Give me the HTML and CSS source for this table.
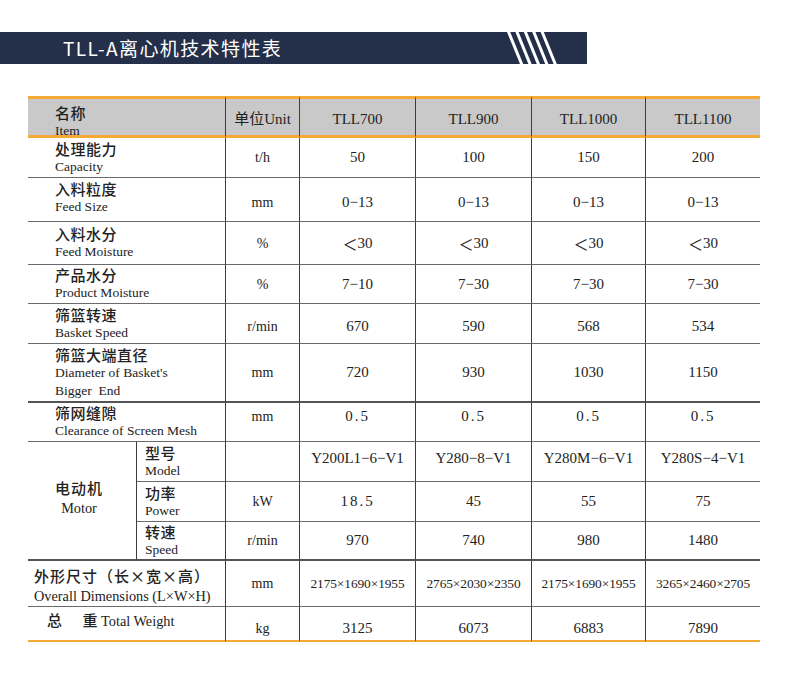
FILE: index.html
```html
<!DOCTYPE html>
<html lang="zh-CN">
<head>
<meta charset="utf-8">
<title>TLL-A离心机技术特性表</title>
<link rel="stylesheet" href="styles.css">
</head>
<body>
<div class="page">
  <div class="titlebar">
    <h1 class="title">TLL-A离心机技术特性表</h1>
    <svg class="stripes" width="52" height="32" viewBox="0 0 52 32" aria-hidden="true">
      <polygon points="1,0 4.2,0 17.2,32 14,32" fill="#fff"/>
      <polygon points="9.4,0 12.6,0 25.6,32 22.4,32" fill="#fff"/>
      <polygon points="17.8,0 21,0 34,32 30.8,32" fill="#fff"/>
      <polygon points="26.2,0 29.4,0 42.4,32 39.2,32" fill="#fff"/>
      <polygon points="34.6,0 37.8,0 50.8,32 47.6,32" fill="#fff"/>
    </svg>
  </div>

  <div class="spec">
    <!-- header -->
    <div class="c head lbl span2"><span class="zh">名称</span><span class="en">Item</span></div>
    <div class="c head">单位Unit</div>
    <div class="c head">TLL700</div>
    <div class="c head">TLL900</div>
    <div class="c head">TLL1000</div>
    <div class="c head last">TLL1100</div>

    <!-- capacity -->
    <div class="c lbl span2"><span class="zh">处理能力</span><span class="en">Capacity</span></div>
    <div class="c unit">t/h</div>
    <div class="c">50</div>
    <div class="c">100</div>
    <div class="c">150</div>
    <div class="c last">200</div>

    <!-- feed size -->
    <div class="c lbl span2 low"><span class="zh">入料粒度</span><span class="en">Feed Size</span></div>
    <div class="c unit down">mm</div>
    <div class="c down">0−13</div>
    <div class="c down">0−13</div>
    <div class="c down">0−13</div>
    <div class="c last down">0−13</div>

    <!-- feed moisture -->
    <div class="c lbl span2"><span class="zh">入料水分</span><span class="en">Feed Moisture</span></div>
    <div class="c unit">%</div>
    <div class="c"><span class="lt">＜</span>30</div>
    <div class="c"><span class="lt">＜</span>30</div>
    <div class="c"><span class="lt">＜</span>30</div>
    <div class="c last"><span class="lt">＜</span>30</div>

    <!-- product moisture -->
    <div class="c lbl span2"><span class="zh">产品水分</span><span class="en">Product Moisture</span></div>
    <div class="c unit">%</div>
    <div class="c">7−10</div>
    <div class="c">7−30</div>
    <div class="c">7−30</div>
    <div class="c last">7−30</div>

    <!-- basket speed -->
    <div class="c lbl span2"><span class="zh">筛篮转速</span><span class="en">Basket Speed</span></div>
    <div class="c unit down">r/min</div>
    <div class="c down">670</div>
    <div class="c down">590</div>
    <div class="c down">568</div>
    <div class="c last down">534</div>

    <!-- diameter -->
    <div class="c lbl span2 thick"><span class="zh">筛篮大端直径</span><span class="en">Diameter of Basket's</span><span class="en">Bigger&nbsp; End</span></div>
    <div class="c unit thick">mm</div>
    <div class="c thick">720</div>
    <div class="c thick">930</div>
    <div class="c thick">1030</div>
    <div class="c last thick">1150</div>

    <!-- clearance -->
    <div class="c lbl span2"><span class="zh">筛网缝隙</span><span class="en">Clearance of Screen Mesh</span></div>
    <div class="c unit up">mm</div>
    <div class="c up spaced">0.5</div>
    <div class="c up spaced">0.5</div>
    <div class="c up spaced">0.5</div>
    <div class="c last up spaced">0.5</div>

    <!-- motor -->
    <div class="c motor thick"><span class="zh">电动机</span><span class="en big">Motor</span></div>
    <div class="c lbl sub"><span class="zh">型号</span><span class="en">Model</span></div>
    <div class="c unit"></div>
    <div class="c up-s">Y200L1−6−V1</div>
    <div class="c up-s">Y280−8−V1</div>
    <div class="c up-s">Y280M−6−V1</div>
    <div class="c last up-s">Y280S−4−V1</div>

    <div class="c lbl sub"><span class="zh">功率</span><span class="en">Power</span></div>
    <div class="c unit">kW</div>
    <div class="c spaced">18.5</div>
    <div class="c">45</div>
    <div class="c">55</div>
    <div class="c last">75</div>

    <div class="c lbl sub thick"><span class="zh">转速</span><span class="en">Speed</span></div>
    <div class="c unit thick">r/min</div>
    <div class="c thick">970</div>
    <div class="c thick">740</div>
    <div class="c thick">980</div>
    <div class="c last thick">1480</div>

    <!-- dimensions -->
    <div class="c lbl span2 dim"><span class="zh wide">外形尺寸（长×宽×高）</span><span class="en big">Overall Dimensions (L×W×H)</span></div>
    <div class="c unit">mm</div>
    <div class="c small">2175×1690×1955</div>
    <div class="c small">2765×2030×2350</div>
    <div class="c small">2175×1690×1955</div>
    <div class="c last small">3265×2460×2705</div>

    <!-- weight -->
    <div class="c lbl span2 weight end"><span class="wline"><span class="zh">总</span><span class="gap"></span><span class="zh zh-w">重</span><span class="en big">Total Weight</span></span></div>
    <div class="c unit end down2">kg</div>
    <div class="c end down2">3125</div>
    <div class="c end down2">6073</div>
    <div class="c end down2">6883</div>
    <div class="c last end down2">7890</div>
  </div>
</div>
</body>
</html>
```

FILE: styles.css
```css
* {
  box-sizing: border-box;
}

body {
  margin: 0;
  background: #ffffff;
  color: #222222;
}

.page {
  padding-top: 32px;
  width: 800px;
}

/* ---- title bar ---- */
.titlebar {
  width: 587px;
  height: 32px;
  background: #243049;
  display: flex;
  align-items: center;
}

.title {
  margin: 0;
  padding-left: 63px;
  font-family: "Noto Sans CJK SC", "Noto Sans", sans-serif;
  font-weight: 400;
  font-size: 19px;
  line-height: 32px;
  letter-spacing: 1.4px;
  color: #ffffff;
}

.stripes {
  display: block;
  margin-left: auto;
  margin-right: 29px;
}

/* ---- spec grid ---- */
.spec {
  margin-top: 32px;
  margin-left: 28px;
  width: 732px;
  display: grid;
  grid-template-columns: 109px 89px 74px 116px 116px 114px 114px;
  grid-template-rows: 42px 40px 44px 43px 39px 40px 59px 39px 40px 40px 39px 46px 35px;
  font-family: "Liberation Serif", "Noto Sans CJK SC", serif;
  font-size: 15px;
  color: #222222;
}

.c {
  display: flex;
  align-items: center;
  justify-content: center;
  border-bottom: 1px solid #6a6a6a;
  border-right: 1px solid #3c3c3c;
  white-space: nowrap;
  line-height: 17px;
}

.c.last {
  border-right: none;
}

.c.thick {
  border-bottom: 2px solid #555555;
}

.head {
  background: #c9c9c9;
  border-top: 3px solid #f6a935;
  border-bottom: 3px solid #f6a935;
  padding-top: 4px;
  font-size: 15px;
}

.c.end {
  border-bottom: 2px solid #f6a935;
}

.span2 {
  grid-column: span 2;
}

.lbl {
  flex-direction: column;
  align-items: flex-start;
  justify-content: center;
  padding-left: 27px;
}

.lbl.sub {
  padding-left: 8px;
}

.lbl.low {
  padding-bottom: 4px;
}

.head.lbl {
  padding-top: 9px;
}

.zh {
  font-family: "Noto Sans CJK SC", sans-serif;
  font-weight: 500;
  font-size: 15px;
  line-height: 18px;
  letter-spacing: 0.5px;
}

.zh.wide {
  letter-spacing: 1px;
}

.zh-w {
  margin-right: 3px;
}

.en {
  font-family: "Liberation Serif", serif;
  font-size: 13.5px;
  line-height: 18px;
}

.en.big {
  font-size: 14.3px;
}

.unit {
  font-size: 14px;
}

.lt {
  font-family: "Noto Sans CJK SC", sans-serif;
  font-size: 15px;
}

.down {
  padding-top: 6px;
}

.up {
  padding-bottom: 12px;
}

.up-s {
  padding-bottom: 6px;
}

.spaced {
  letter-spacing: 2px;
}

.small {
  font-size: 13.4px;
  letter-spacing: -0.1px;
}

.motor {
  grid-row: span 3;
  flex-direction: column;
  padding-right: 6px;
  padding-bottom: 8px;
}

.motor .zh {
  line-height: 22px;
  letter-spacing: 1px;
}

.dim {
  padding-left: 6px;
  padding-top: 2px;
}

.dim .zh {
  line-height: 22px;
}

.weight {
  justify-content: flex-start;
  padding-left: 19px;
  padding-top: 4px;
}

.wline {
  display: flex;
  align-items: baseline;
}

.gap {
  display: inline-block;
  width: 20px;
}

.down2 {
  padding-top: 9px;
}
```
